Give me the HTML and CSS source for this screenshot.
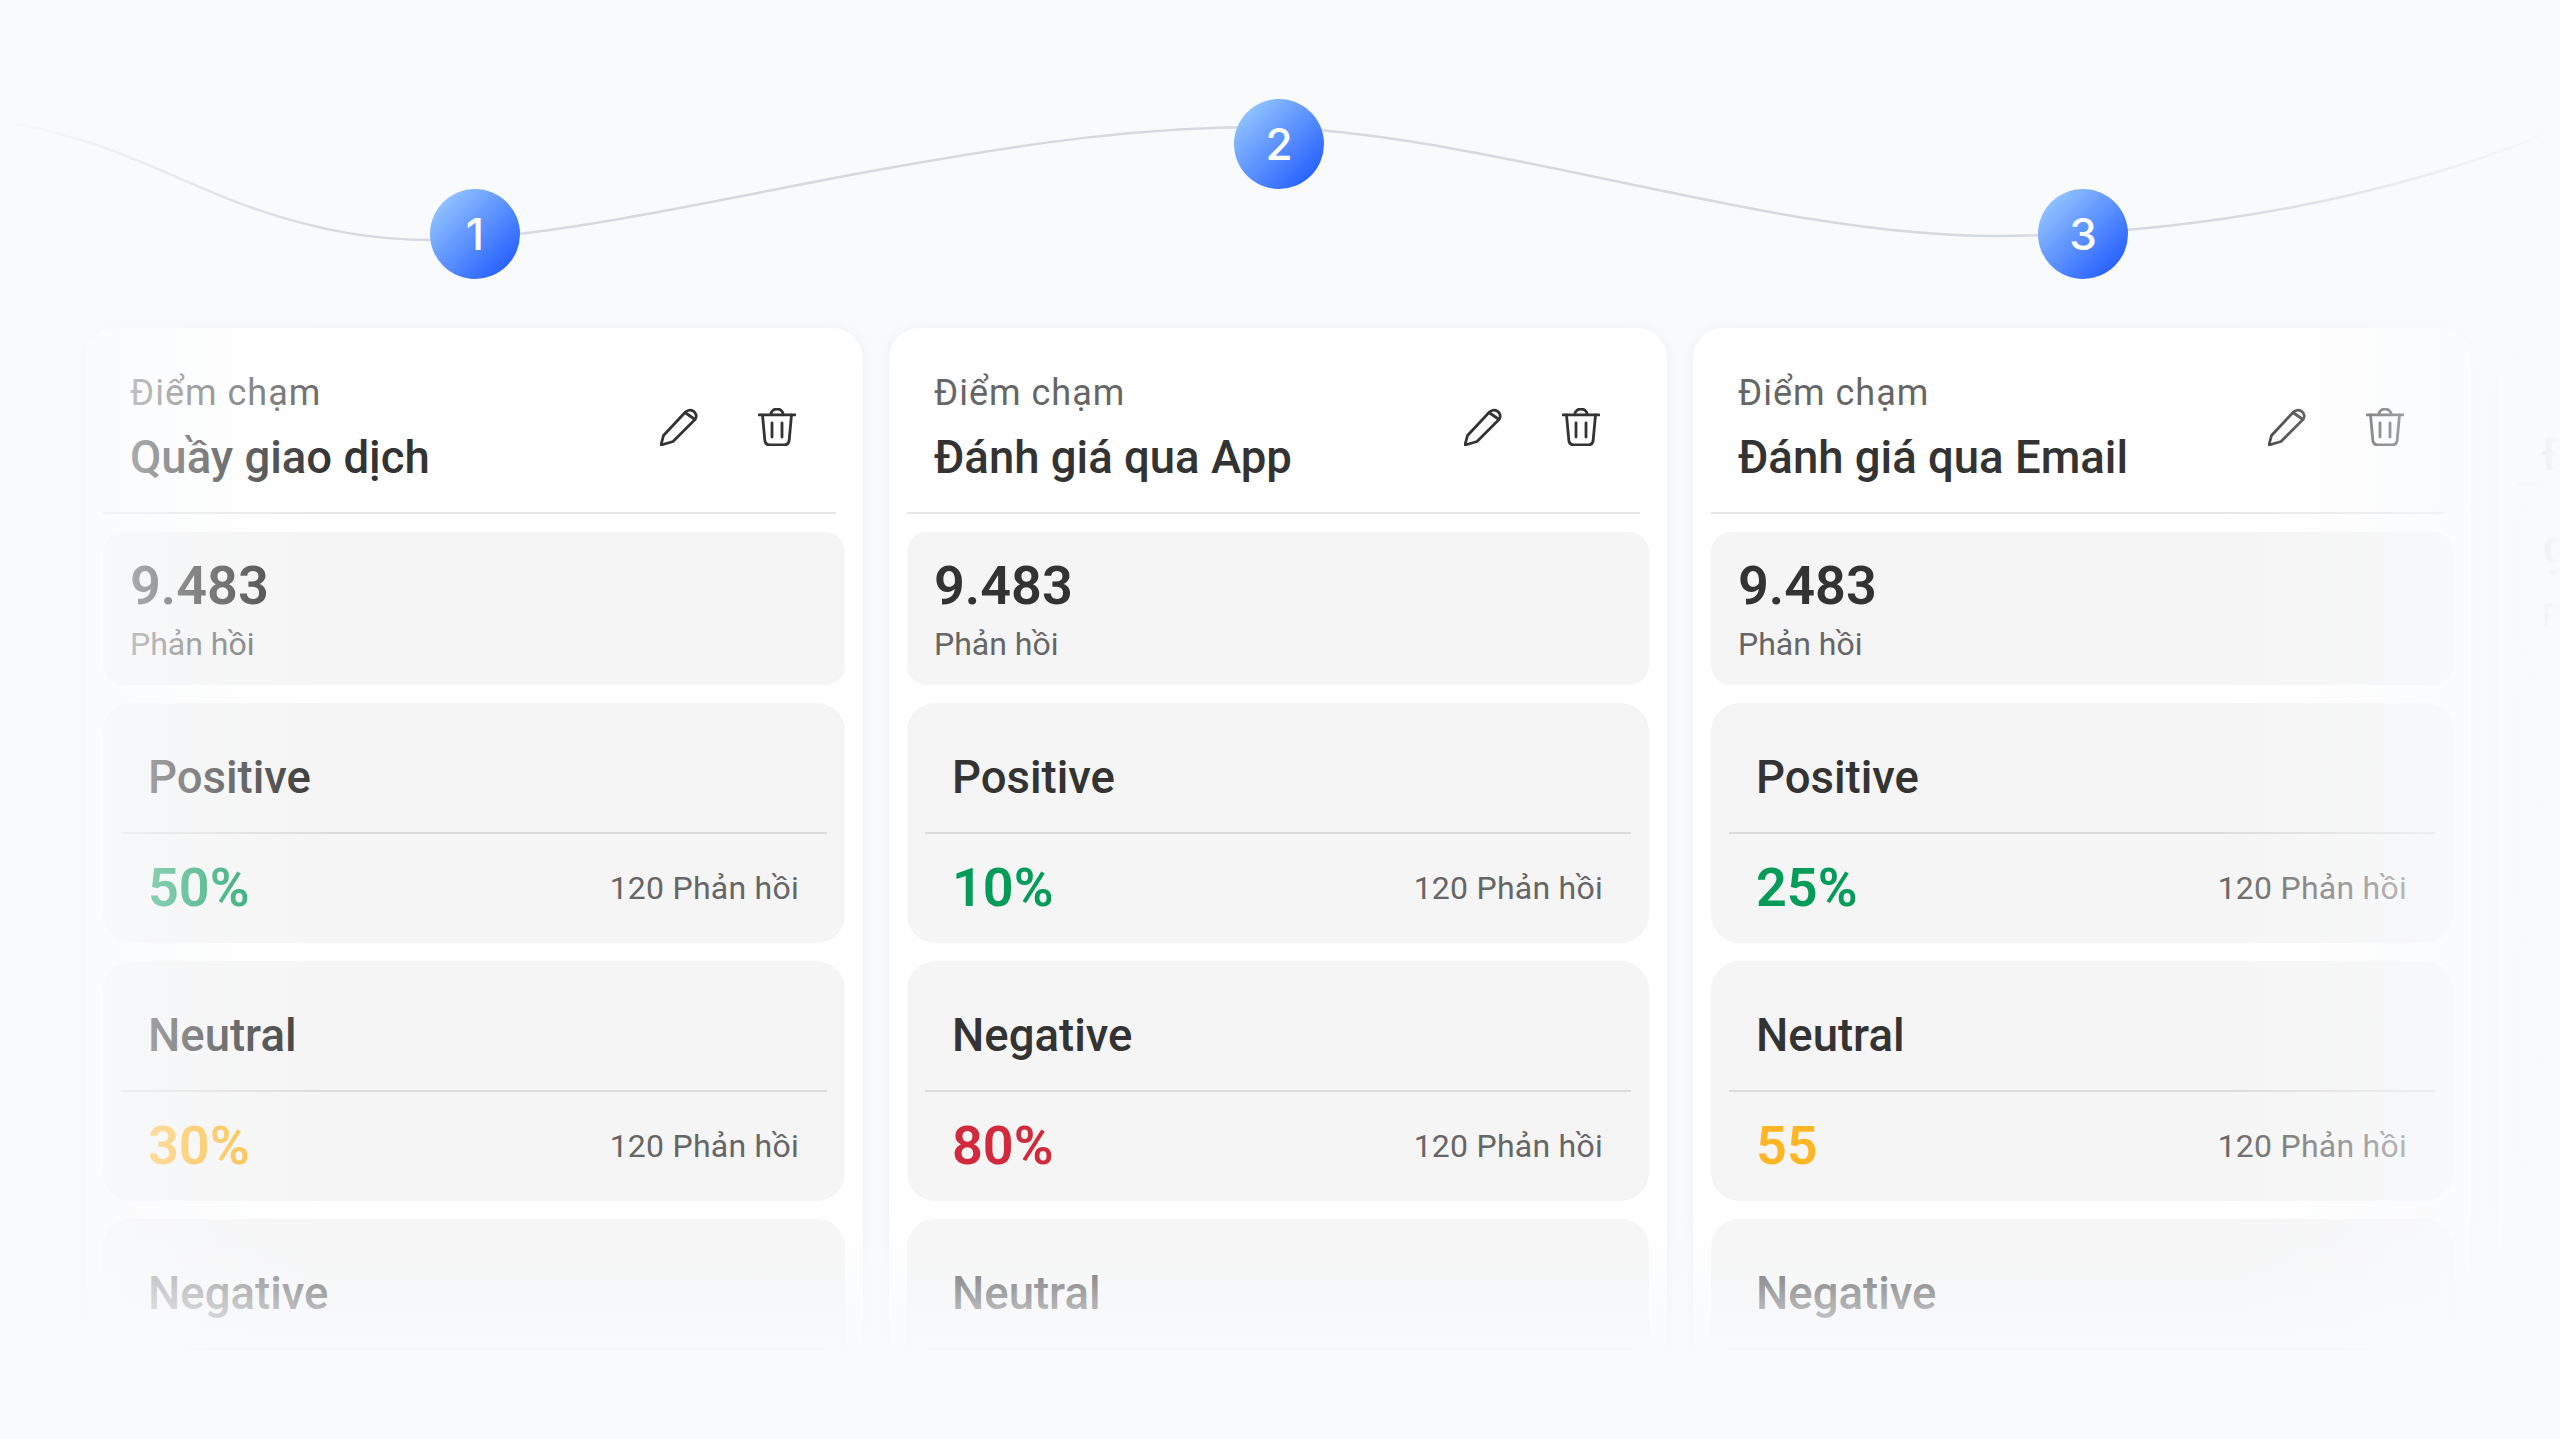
FILE: index.html
```html
<!DOCTYPE html>
<html>
<head>
  <meta charset="UTF-8">
  <title>Điểm chạm</title>
  <link rel="stylesheet" href="styles.css">
</head>
<body>
  <div class="page">
    <svg class="curve" viewBox="0 0 2560 300" width="2560" height="300" fill="none">
      <path d="M11 123C110 140 170 178 247 206C320 232 380 241 440 240C560 238 760 190 900 166C1030 143 1140 127 1260 127C1480 130 1770 238 2000 236C2200 234 2400 196 2560 128" stroke="#d5d9e0" stroke-width="2.5"/>
    </svg>

    <div class="columns">
      <div class="column">
        <div class="slot"><div class="node">1</div></div>
        <div class="card">
          <div class="card-head">
            <div class="head-text">
              <div class="head-label">Điểm chạm</div>
              <div class="head-title">Quầy giao dịch</div>
            </div>
            <div class="head-icons">
              <svg class="icon" viewBox="0 0 38 38"><use href="#pencil"/></svg>
              <svg class="icon" viewBox="0 0 38 38"><use href="#trash"/></svg>
            </div>
          </div>
          <div class="stat">
            <div class="stat-num">9.483</div>
            <div class="stat-label">Phản hồi</div>
          </div>
          <div class="section">
            <div class="section-title">Positive</div>
            <div class="section-row"><span class="pct green">50%</span><span class="count">120 Phản hồi</span></div>
          </div>
          <div class="section">
            <div class="section-title">Neutral</div>
            <div class="section-row"><span class="pct yellow">30%</span><span class="count">120 Phản hồi</span></div>
          </div>
          <div class="section">
            <div class="section-title">Negative</div>
            <div class="section-row"><span class="pct red">20%</span><span class="count">120 Phản hồi</span></div>
          </div>
        </div>
      </div>

      <div class="column">
        <div class="slot slot-high"><div class="node">2</div></div>
        <div class="card">
          <div class="card-head">
            <div class="head-text">
              <div class="head-label">Điểm chạm</div>
              <div class="head-title">Đánh giá qua App</div>
            </div>
            <div class="head-icons">
              <svg class="icon" viewBox="0 0 38 38"><use href="#pencil"/></svg>
              <svg class="icon" viewBox="0 0 38 38"><use href="#trash"/></svg>
            </div>
          </div>
          <div class="stat">
            <div class="stat-num">9.483</div>
            <div class="stat-label">Phản hồi</div>
          </div>
          <div class="section">
            <div class="section-title">Positive</div>
            <div class="section-row"><span class="pct green">10%</span><span class="count">120 Phản hồi</span></div>
          </div>
          <div class="section">
            <div class="section-title">Negative</div>
            <div class="section-row"><span class="pct red">80%</span><span class="count">120 Phản hồi</span></div>
          </div>
          <div class="section">
            <div class="section-title">Neutral</div>
            <div class="section-row"><span class="pct yellow">10%</span><span class="count">120 Phản hồi</span></div>
          </div>
        </div>
      </div>

      <div class="column">
        <div class="slot"><div class="node">3</div></div>
        <div class="card">
          <div class="card-head">
            <div class="head-text">
              <div class="head-label">Điểm chạm</div>
              <div class="head-title">Đánh giá qua Email</div>
            </div>
            <div class="head-icons">
              <svg class="icon" viewBox="0 0 38 38"><use href="#pencil"/></svg>
              <svg class="icon" viewBox="0 0 38 38"><use href="#trash"/></svg>
            </div>
          </div>
          <div class="stat">
            <div class="stat-num">9.483</div>
            <div class="stat-label">Phản hồi</div>
          </div>
          <div class="section">
            <div class="section-title">Positive</div>
            <div class="section-row"><span class="pct green">25%</span><span class="count">120 Phản hồi</span></div>
          </div>
          <div class="section">
            <div class="section-title">Neutral</div>
            <div class="section-row"><span class="pct yellow">55</span><span class="count">120 Phản hồi</span></div>
          </div>
          <div class="section">
            <div class="section-title">Negative</div>
            <div class="section-row"><span class="pct red">20%</span><span class="count">120 Phản hồi</span></div>
          </div>
        </div>
      </div>

      <!-- next card, only just showing at the right edge -->
      <div class="column">
        <div class="slot"></div>
        <div class="card card-short">
          <div class="card-head card-head-short">
            <div class="head-text">
              <div class="head-title">Đánh giá qua Web</div>
            </div>
          </div>
          <div class="stat">
            <div class="stat-num">9.483</div>
            <div class="stat-label">Phản hồi</div>
          </div>
          <div class="section">
            <div class="section-title">Positive</div>
            <div class="section-row"><span class="pct green">25%</span><span class="count">120 Phản hồi</span></div>
          </div>
          <div class="section">
            <div class="section-title">Neutral</div>
            <div class="section-row"><span class="pct yellow">55</span><span class="count">120 Phản hồi</span></div>
          </div>
        </div>
      </div>
    </div>

    <div class="fade fade-bottom"></div>
    <div class="fade fade-left"></div>
    <div class="fade fade-right"></div>

    <svg width="0" height="0" class="defs">
      <defs>
        <g id="pencil" fill="none" stroke="#333" stroke-width="2.8" stroke-linejoin="round" stroke-linecap="round">
          <path d="M1 37L3.5 27.5L25 4.5C27 2 30.5 1.5 33.5 3.2C36.5 5.4 37 9 35 11.5L13 33.5Z"/>
          <path d="M25 4.5L35 11.5"/>
        </g>
        <g id="trash" fill="none" stroke="#333" stroke-width="2.8" stroke-linecap="round" stroke-linejoin="round">
          <path d="M1 6.8H37"/>
          <path d="M13 6.8V6A6 5 0 0 1 25 6V6.8"/>
          <path d="M4.5 6.8L6.8 32C7.1 35.2 9 37 12 37H26C29 37 30.9 35.2 31.2 32L33.5 6.8"/>
          <path d="M14 15V29M24 15V29"/>
        </g>
      </defs>
    </svg>
  </div>
</body>
</html>
```

FILE: styles.css
```css
body {
  margin: 0;
  background: #f9fafc;
  font-family: Roboto, "Liberation Sans", sans-serif;
  color: #333;
}
.page {
  position: relative;
  width: 2560px;
  height: 1439px;
  overflow: hidden;
}
.curve {
  position: absolute;
  left: 0;
  top: 0;
}
.defs {
  position: absolute;
}
.columns {
  position: relative;
  display: flex;
  gap: 26px;
  padding-left: 85px;
}
.column {
  flex: 0 0 778px;
}
.slot {
  height: 328px;
  box-sizing: border-box;
  padding: 189px 0 0 2px;
  display: flex;
  justify-content: center;
}
.slot-high {
  padding-top: 99px;
}
.node {
  width: 90px;
  height: 90px;
  border-radius: 50%;
  background: linear-gradient(135deg, #a3d3ff, #1450ff);
  color: #fff;
  font-family: Inter, Roboto, sans-serif;
  font-size: 44px;
  font-weight: 500;
  display: flex;
  align-items: center;
  justify-content: center;
}
.card {
  background: #fff;
  border-radius: 30px;
  padding: 0 18px;
  height: 1200px;
  box-shadow: 0 0 12px rgba(60, 70, 90, 0.06);
}
.card-short {
  margin-top: 27px;
}
.card-head {
  height: 186px;
  box-sizing: border-box;
  margin-right: 9px;
  padding: 40px 0 0 27px;
  border-bottom: 2px solid #e6e6e6;
  display: flex;
  justify-content: space-between;
  align-items: flex-start;
}
.card-head-short {
  height: 130px;
}
.head-label {
  font-size: 36px;
  line-height: 50px;
  color: #666;
  letter-spacing: 1px;
}
.head-title {
  margin-top: 10px;
  font-size: 45.5px;
  line-height: 60px;
  font-weight: 500;
}
.card-head-short .head-title {
  margin-top: 30px;
}
.head-icons {
  display: flex;
  gap: 60px;
  margin: 40px 40px 0 0;
}
.icon {
  width: 38px;
  height: 38px;
}
.stat {
  margin-top: 18px;
  height: 153px;
  box-sizing: border-box;
  padding: 23px 27px 0;
  background: #f5f5f5;
  border-radius: 20px;
}
.stat-num {
  font-size: 54px;
  line-height: 62px;
  font-weight: 600;
}
.stat-label {
  font-size: 32px;
  line-height: 44px;
  margin-top: 5px;
  color: #666;
}
.section {
  margin-top: 18px;
  height: 240px;
  background: #f5f5f5;
  border-radius: 28px;
  padding: 0 18px;
}
.section-title {
  height: 131px;
  box-sizing: border-box;
  padding: 45px 0 0 27px;
  border-bottom: 2px solid #dcdcdc;
  font-size: 45.5px;
  line-height: 60px;
  font-weight: 500;
}
.section-row {
  height: 109px;
  box-sizing: border-box;
  padding: 0 28px 2px 27px;
  display: flex;
  justify-content: space-between;
  align-items: center;
}
.pct {
  font-size: 54px;
  font-weight: 600;
}
.count {
  font-size: 32px;
  color: #666;
  letter-spacing: 0.25px;
}
.green {
  color: #059c5a;
}
.yellow {
  color: #ffb626;
}
.red {
  color: #d12a3c;
}
.fade {
  position: absolute;
}
.fade-bottom {
  left: 0;
  right: 0;
  top: 1200px;
  bottom: 0;
  background: linear-gradient(to bottom, rgba(249, 250, 252, 0), rgba(249, 250, 252, 0.88) 145px, #f9fafc 165px);
}
.fade-left {
  left: 0;
  top: 0;
  bottom: 0;
  width: 330px;
  background: linear-gradient(to right, #f9fafc, rgba(249, 250, 252, 0));
}
.fade-right {
  right: 0;
  top: 0;
  bottom: 0;
  width: 340px;
  background: linear-gradient(to left, #f9fafc, rgba(249, 250, 252, 0));
}
```
